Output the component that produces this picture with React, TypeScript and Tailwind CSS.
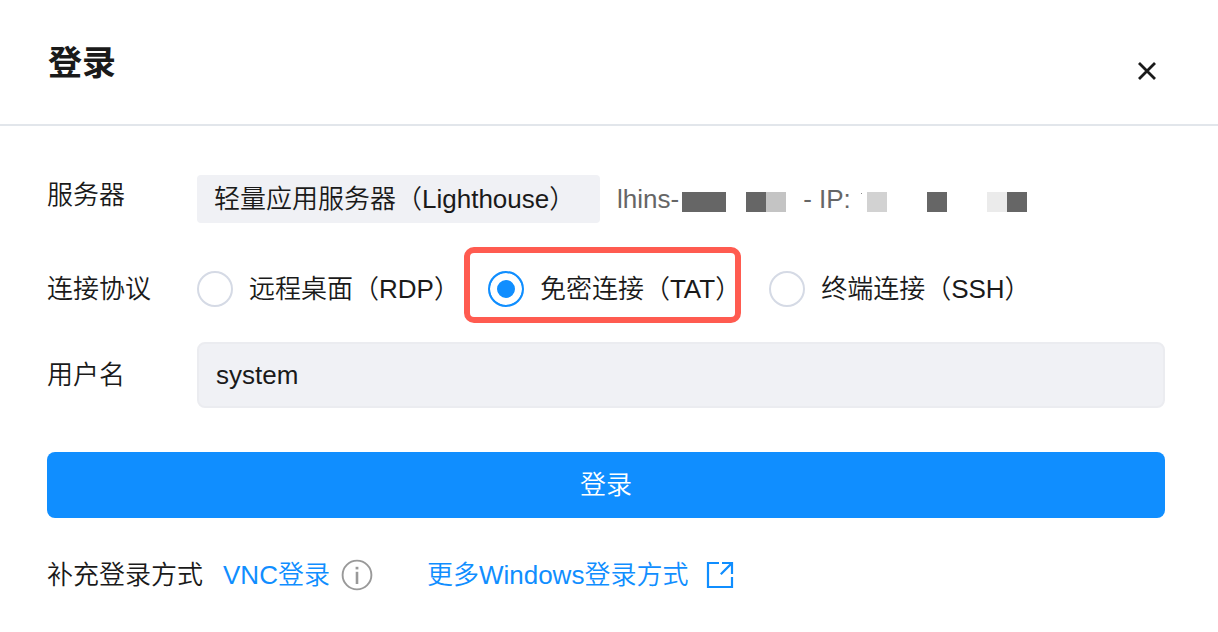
import { useState } from 'react';
import type { ReactNode } from 'react';

const protocols = [
  { id: 'rdp', name: '远程桌面（RDP）' },
  { id: 'tat', name: '免密连接（TAT）', recommended: true },
  { id: 'ssh', name: '终端连接（SSH）' },
];

const CloseIcon = () => (
  <svg viewBox="0 0 20 20" className="size-5" fill="none" stroke="currentColor" strokeWidth="2.8">
    <path d="M2 2L18 18M18 2L2 18" />
  </svg>
);

const InfoIcon = () => (
  <svg viewBox="0 0 32 32" className="size-8" fill="none" stroke="#999">
    <circle cx="16" cy="16" r="14.4" strokeWidth="1.9" />
    <path d="M16 12.8V25" strokeWidth="2.6" />
    <path d="M16 7.8V10.4" strokeWidth="2.8" />
  </svg>
);

const ExternalIcon = () => (
  <svg viewBox="0 0 28 28" className="size-7" fill="none" stroke="currentColor" strokeWidth="2.2">
    <path d="M13 2H2V26H26V16" />
    <path d="M16 2H26V13M25.6 2.4L14.8 13.2" />
  </svg>
);

// masked part of the instance id / ip
const Mask = ({ className }: { className: string }) => (
  <span className={`mt-[6px] h-5 shrink-0 ${className}`} />
);

const Row = ({ label, htmlFor, className, children }: {
  label: string;
  htmlFor?: string;
  className?: string;
  children: ReactNode;
}) => (
  <div className={`flex items-center ${className ?? ''}`}>
    <label htmlFor={htmlFor} className="w-[150px] shrink-0">{label}</label>
    {children}
  </div>
);

const App = () => {
  const [protocol, setProtocol] = useState('tat');
  const [username, setUsername] = useState('system');

  return (
    <div className="min-h-screen bg-white text-[26px] leading-9 font-[350] text-[#1a1a1a] font-['Liberation_Sans','Noto_Sans_CJK_SC',sans-serif]">
      <header className="flex items-center justify-between border-b-2 border-[#e2e6eb] pt-8 pb-[30px] pl-12 pr-[61px]">
        <h1 className="text-[34px] leading-[62px] font-bold">登录</h1>
        <button type="button" aria-label="关闭" className="mt-4 cursor-pointer">
          <CloseIcon />
        </button>
      </header>

      <form className="pt-[49px] pl-[47px] pr-[53px]" onSubmit={(e) => e.preventDefault()}>
        <div className="flex items-center">
          <span className="w-[150px] shrink-0 pb-2">服务器</span>
          <span className="h-12 w-[403px] shrink-0 rounded bg-[#f0f1f5] pl-[17px] leading-[48px]">
            轻量应用服务器（Lighthouse）
          </span>
          <div className="ml-[17px] flex items-center text-[#666]">
            <span>lhins-</span>
            <Mask className="ml-[3px] w-11 bg-[#666]" />
            <Mask className="ml-5 w-5 bg-[#666]" />
            <Mask className="w-5 bg-[#c4c4c4]" />
            <span className="ml-[17px]">- IP:</span>
            <span className="mb-3 ml-[10px] size-px bg-[#888]" />
            <Mask className="ml-[5px] w-5 bg-[#d2d2d2]" />
            <Mask className="ml-10 w-5 bg-[#666]" />
            <Mask className="ml-10 w-5 bg-[#ebebeb]" />
            <Mask className="w-5 bg-[#666]" />
          </div>
        </div>

        <div role="radiogroup" aria-label="连接协议" className="mt-12 flex items-center">
          <span className="w-[150px] shrink-0">连接协议</span>
          <div className="flex gap-7">
            {protocols.map((p) => (
              <label key={p.id} className="relative flex cursor-pointer items-center gap-4 whitespace-nowrap">
                <input
                  type="radio"
                  name="protocol"
                  value={p.id}
                  checked={protocol === p.id}
                  onChange={() => setProtocol(p.id)}
                  className="size-9 shrink-0 appearance-none rounded-full border-2 border-[#d5dae5] checked:border-[#108eff] checked:bg-[#108eff] checked:shadow-[inset_0_0_0_7px_#fff]"
                />
                {p.name}
                {p.recommended && (
                  <span className="pointer-events-none absolute -top-6 right-0 -bottom-4 -left-6 rounded-[10px] border-6 border-[#ff5b50]" />
                )}
              </label>
            ))}
          </div>
        </div>

        <Row label="用户名" htmlFor="username" className="mt-[35px]">
          <input
            id="username"
            value={username}
            onChange={(e) => setUsername(e.target.value)}
            className="h-[66px] min-w-0 flex-1 rounded-lg border-2 border-[#ebecf0] bg-[#f0f1f5] px-[17px]"
          />
        </Row>

        <button
          type="submit"
          className="mt-11 h-[66px] w-full cursor-pointer rounded-lg bg-[#108eff] text-white"
        >
          登录
        </button>

        <div className="mt-[39px] flex items-center">
          <span>补充登录方式</span>
          <a href="#vnc" className="ml-5 text-[#108eff]">VNC登录</a>
          <button type="button" aria-label="说明" className="ml-[11px]">
            <InfoIcon />
          </button>
          <a href="#more" className="ml-[54px] flex items-center gap-[18px] text-[#108eff]">
            更多Windows登录方式
            <ExternalIcon />
          </a>
        </div>
      </form>
    </div>
  );
};

export default App;
